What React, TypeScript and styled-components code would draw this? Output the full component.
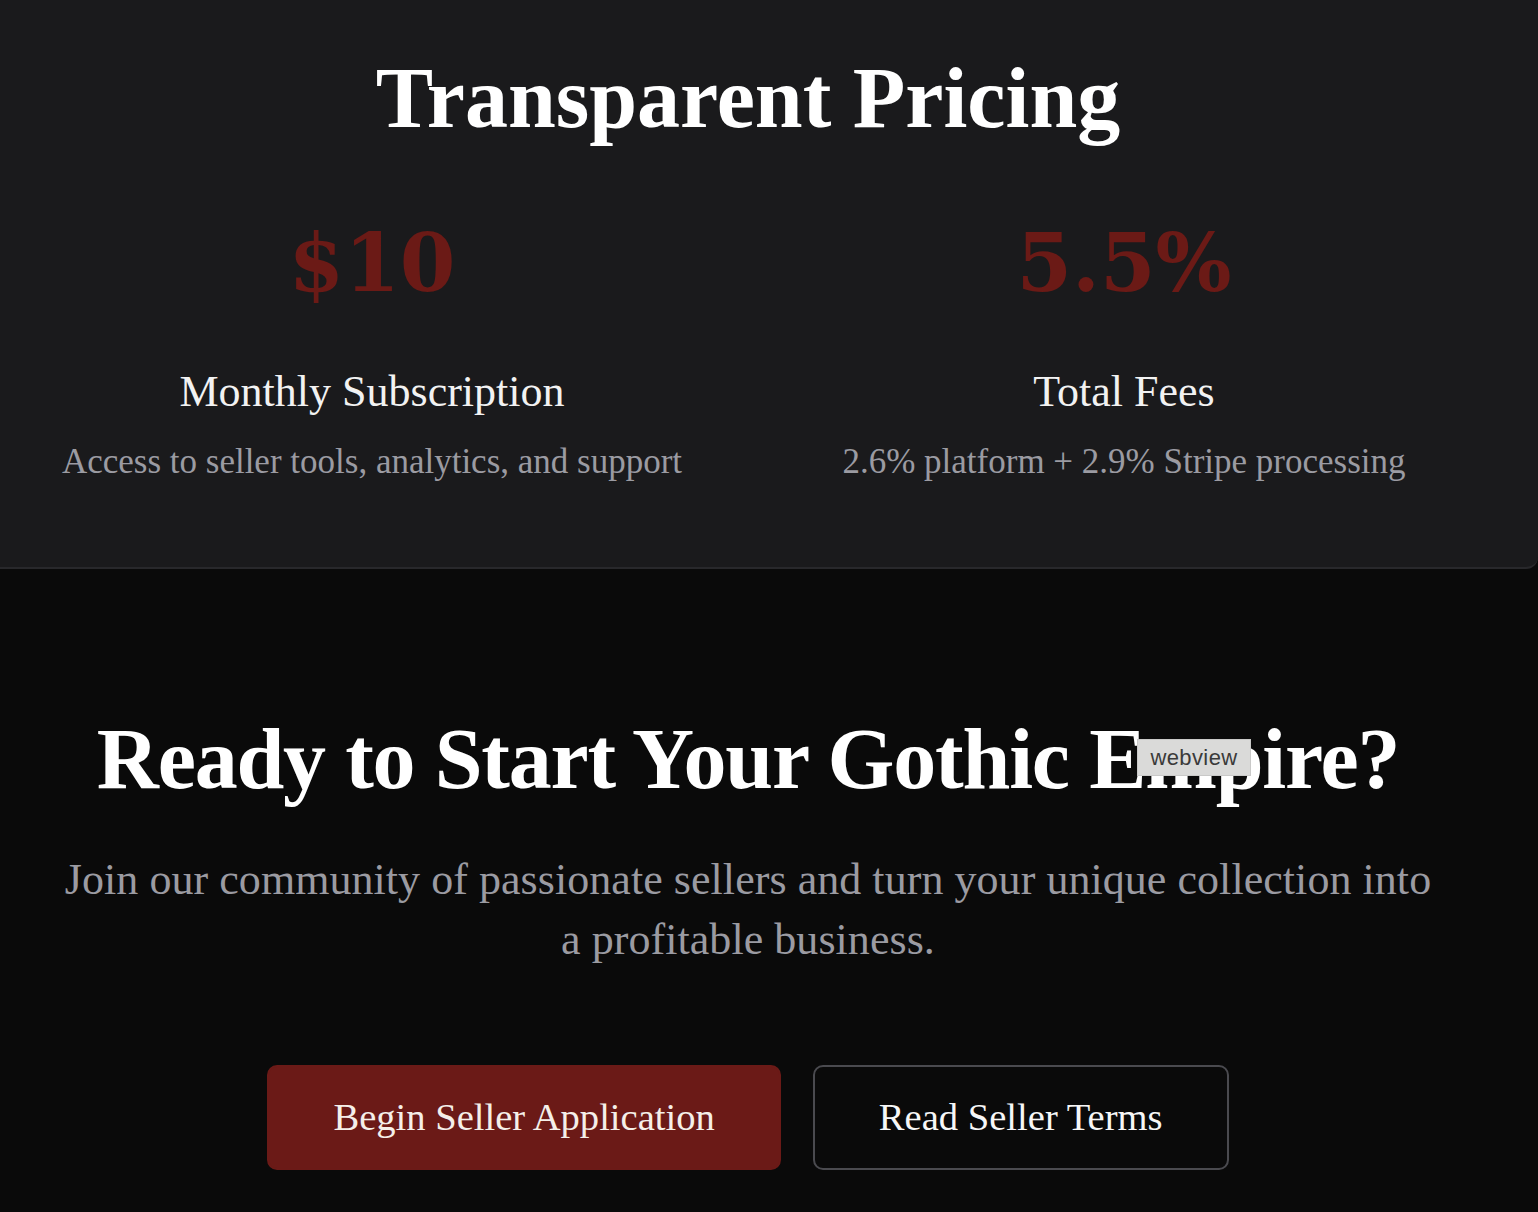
import styled, { createGlobalStyle } from 'styled-components'

const GlobalStyle = createGlobalStyle`
  html, body {
    margin: 0;
    padding: 0;
    background: #0a0a0a;
    color: #f4f4f5;
    font-family: "Liberation Serif", "DejaVu Serif", serif;
  }
  body {
    overflow: hidden;
  }
`

const Page = styled.div`
  display: flex;
  flex-direction: column;
  min-height: 1212px;
  background: #0a0a0a;
`

const PricingCard = styled.section`
  background: #1a1a1c;
  border-bottom: 2px solid #28282b;
  border-bottom-right-radius: 12px;
  padding: 50px 0 83px;
`

const Inner = styled.div`
  width: 1496px;
  box-sizing: border-box;
  padding: 0 32px;
  position: relative;
`

const Heading = styled.h2<{ $tight?: boolean }>`
  margin: 0;
  text-align: center;
  font-family: "Liberation Serif", serif;
  font-weight: 700;
  font-size: 86px;
  line-height: 96px;
  color: #ffffff;
  letter-spacing: ${(p) => (p.$tight ? '-1.2px' : '0')};
`

const PlanGrid = styled.div`
  display: grid;
  grid-template-columns: 1fr 1fr;
  column-gap: 72px;
  margin-top: 69px;
`

const Plan = styled.div`
  display: flex;
  flex-direction: column;
  align-items: center;
  text-align: center;
`

const Figure = styled.div`
  font-family: "DejaVu Serif", serif;
  font-weight: 700;
  font-size: 80px;
  line-height: 96px;
  color: #6b1a16;
`

const PlanName = styled.h3`
  margin: 55px 0 0;
  font-weight: 400;
  font-size: 44px;
  line-height: 52px;
  color: #f2f2f2;
`

const PlanNote = styled.p`
  margin: 22px 0 0;
  font-size: 35px;
  line-height: 44px;
  color: #9b9ba2;
`

const Cta = styled.section`
  padding: 142px 0 120px;
`

const Lead = styled.p`
  margin: 43px auto 0;
  max-width: 1386px;
  text-align: center;
  font-size: 44px;
  line-height: 60px;
  letter-spacing: 0.05px;
  color: #9b9ba2;
`

const Actions = styled.div`
  display: flex;
  justify-content: center;
  gap: 32px;
  margin-top: 95px;
`

const Button = styled.button<{ $primary?: boolean }>`
  font-family: "Liberation Serif", serif;
  font-size: 38.6px;
  line-height: 45px;
  padding: 28px 64px;
  border-radius: 10px;
  border: 2px solid ${(p) => (p.$primary ? '#6b1a17' : '#4a4a4f')};
  background: ${(p) => (p.$primary ? '#6b1a17' : 'transparent')};
  color: ${(p) => (p.$primary ? '#f5efe9' : '#f7f7f7')};
  cursor: pointer;
`

const Tooltip = styled.span`
  position: absolute;
  left: 1137px;
  top: 28px;
  width: 114px;
  height: 37px;
  box-sizing: border-box;
  display: flex;
  align-items: center;
  justify-content: center;
  background: #dadad9;
  border: 1px solid #c9c9c8;
  font-family: "Liberation Sans", Arial, sans-serif;
  font-size: 22px;
  letter-spacing: 0.4px;
  color: #3a3a3a;
`

const plans = [
  { figure: '$10', name: 'Monthly Subscription', note: 'Access to seller tools, analytics, and support' },
  { figure: '5.5%', name: 'Total Fees', note: '2.6% platform + 2.9% Stripe processing' },
]

const App = () => {
  return (
    <Page>
      <GlobalStyle />
      <PricingCard>
        <Inner>
          <Heading>Transparent Pricing</Heading>
          <PlanGrid>
            {plans.map((plan) => (
              <Plan key={plan.name}>
                <Figure>{plan.figure}</Figure>
                <PlanName>{plan.name}</PlanName>
                <PlanNote>{plan.note}</PlanNote>
              </Plan>
            ))}
          </PlanGrid>
        </Inner>
      </PricingCard>
      <Cta>
        <Inner>
          <Heading $tight>Ready to Start Your Gothic Empire?</Heading>
          <Tooltip>webview</Tooltip>
          <Lead>
            Join our community of passionate sellers and turn your unique collection into a profitable business.
          </Lead>
          <Actions>
            <Button $primary>Begin Seller Application</Button>
            <Button>Read Seller Terms</Button>
          </Actions>
        </Inner>
      </Cta>
    </Page>
  )
}

export default App
